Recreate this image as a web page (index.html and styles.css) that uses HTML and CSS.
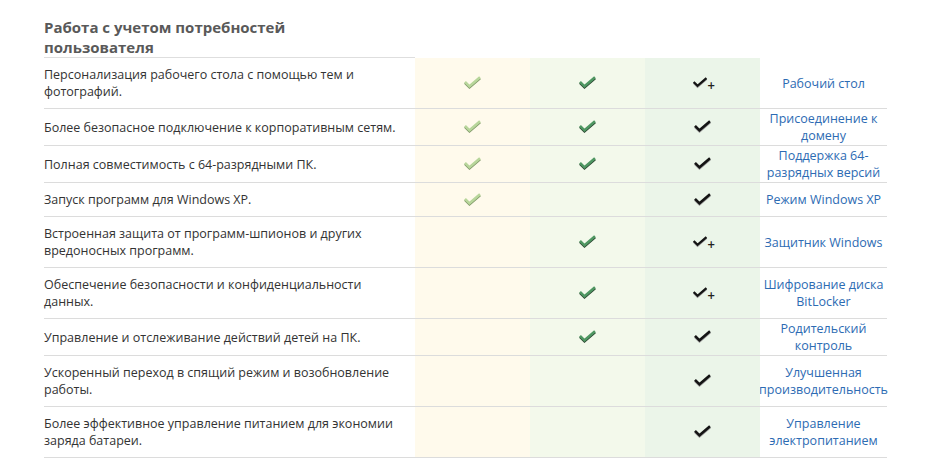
FILE: index.html
```html
<!DOCTYPE html>
<html lang="ru">
<head>
<meta charset="utf-8">
<link rel="stylesheet" href="styles.css">
</head>
<body>
<div class="page">
  <div class="section-title">Работа с учетом потребностей пользователя</div>
  <div class="grid">
    <div class="row">
      <div class="desc">Персонализация рабочего стола с помощью тем и фотографий.</div>
      <div class="c c1"><svg class="ck" viewBox="0 0 20 14"><path class="sh" d="M2 6.8 L6.5 11.3 L17 2.3"/><path class="fg" d="M2 5.8 L6.5 10.3 L17 1.3"/></svg></div>
      <div class="c c2"><svg class="ck" viewBox="0 0 20 14"><path class="sh" d="M2 6.8 L6.5 11.3 L17 2.3"/><path class="fg" d="M2 5.8 L6.5 10.3 L17 1.3"/></svg></div>
      <div class="c c3 plus-cell"><svg class="ck" viewBox="0 0 20 14"><path class="sh" d="M2 6.8 L6.5 11.3 L17 2.3"/><path class="fg" d="M2 5.8 L6.5 10.3 L17 1.3"/></svg><span class="plus">+</span></div>
      <div class="link"><a href="#">Рабочий стол</a></div>
    </div>
    <div class="row">
      <div class="desc">Более безопасное подключение к корпоративным сетям.</div>
      <div class="c c1"><svg class="ck" viewBox="0 0 20 14"><path class="sh" d="M2 6.8 L6.5 11.3 L17 2.3"/><path class="fg" d="M2 5.8 L6.5 10.3 L17 1.3"/></svg></div>
      <div class="c c2"><svg class="ck" viewBox="0 0 20 14"><path class="sh" d="M2 6.8 L6.5 11.3 L17 2.3"/><path class="fg" d="M2 5.8 L6.5 10.3 L17 1.3"/></svg></div>
      <div class="c c3"><svg class="ck" viewBox="0 0 20 14"><path class="sh" d="M2 6.8 L6.5 11.3 L17 2.3"/><path class="fg" d="M2 5.8 L6.5 10.3 L17 1.3"/></svg></div>
      <div class="link"><a href="#">Присоединение к домену</a></div>
    </div>
    <div class="row">
      <div class="desc">Полная совместимость с 64-разрядными ПК.</div>
      <div class="c c1"><svg class="ck" viewBox="0 0 20 14"><path class="sh" d="M2 6.8 L6.5 11.3 L17 2.3"/><path class="fg" d="M2 5.8 L6.5 10.3 L17 1.3"/></svg></div>
      <div class="c c2"><svg class="ck" viewBox="0 0 20 14"><path class="sh" d="M2 6.8 L6.5 11.3 L17 2.3"/><path class="fg" d="M2 5.8 L6.5 10.3 L17 1.3"/></svg></div>
      <div class="c c3"><svg class="ck" viewBox="0 0 20 14"><path class="sh" d="M2 6.8 L6.5 11.3 L17 2.3"/><path class="fg" d="M2 5.8 L6.5 10.3 L17 1.3"/></svg></div>
      <div class="link"><a href="#">Поддержка 64-разрядных версий</a></div>
    </div>
    <div class="row">
      <div class="desc">Запуск программ для Windows XP.</div>
      <div class="c c1"><svg class="ck" viewBox="0 0 20 14"><path class="sh" d="M2 6.8 L6.5 11.3 L17 2.3"/><path class="fg" d="M2 5.8 L6.5 10.3 L17 1.3"/></svg></div>
      <div class="c c2"></div>
      <div class="c c3"><svg class="ck" viewBox="0 0 20 14"><path class="sh" d="M2 6.8 L6.5 11.3 L17 2.3"/><path class="fg" d="M2 5.8 L6.5 10.3 L17 1.3"/></svg></div>
      <div class="link"><a href="#">Режим Windows XP</a></div>
    </div>
    <div class="row">
      <div class="desc">Встроенная защита от программ-шпионов и других вредоносных программ.</div>
      <div class="c c1"></div>
      <div class="c c2"><svg class="ck" viewBox="0 0 20 14"><path class="sh" d="M2 6.8 L6.5 11.3 L17 2.3"/><path class="fg" d="M2 5.8 L6.5 10.3 L17 1.3"/></svg></div>
      <div class="c c3 plus-cell"><svg class="ck" viewBox="0 0 20 14"><path class="sh" d="M2 6.8 L6.5 11.3 L17 2.3"/><path class="fg" d="M2 5.8 L6.5 10.3 L17 1.3"/></svg><span class="plus">+</span></div>
      <div class="link"><a href="#">Защитник Windows</a></div>
    </div>
    <div class="row">
      <div class="desc">Обеспечение безопасности и конфиденциальности данных.</div>
      <div class="c c1"></div>
      <div class="c c2"><svg class="ck" viewBox="0 0 20 14"><path class="sh" d="M2 6.8 L6.5 11.3 L17 2.3"/><path class="fg" d="M2 5.8 L6.5 10.3 L17 1.3"/></svg></div>
      <div class="c c3 plus-cell"><svg class="ck" viewBox="0 0 20 14"><path class="sh" d="M2 6.8 L6.5 11.3 L17 2.3"/><path class="fg" d="M2 5.8 L6.5 10.3 L17 1.3"/></svg><span class="plus">+</span></div>
      <div class="link"><a href="#">Шифрование диска BitLocker</a></div>
    </div>
    <div class="row">
      <div class="desc">Управление и отслеживание действий детей на ПК.</div>
      <div class="c c1"></div>
      <div class="c c2"><svg class="ck" viewBox="0 0 20 14"><path class="sh" d="M2 6.8 L6.5 11.3 L17 2.3"/><path class="fg" d="M2 5.8 L6.5 10.3 L17 1.3"/></svg></div>
      <div class="c c3"><svg class="ck" viewBox="0 0 20 14"><path class="sh" d="M2 6.8 L6.5 11.3 L17 2.3"/><path class="fg" d="M2 5.8 L6.5 10.3 L17 1.3"/></svg></div>
      <div class="link"><a href="#">Родительский контроль</a></div>
    </div>
    <div class="row">
      <div class="desc">Ускоренный переход в спящий режим и возобновление работы.</div>
      <div class="c c1"></div>
      <div class="c c2"></div>
      <div class="c c3"><svg class="ck" viewBox="0 0 20 14"><path class="sh" d="M2 6.8 L6.5 11.3 L17 2.3"/><path class="fg" d="M2 5.8 L6.5 10.3 L17 1.3"/></svg></div>
      <div class="link"><a href="#">Улучшенная производительность</a></div>
    </div>
    <div class="row">
      <div class="desc">Более эффективное управление питанием для экономии заряда батареи.</div>
      <div class="c c1"></div>
      <div class="c c2"></div>
      <div class="c c3"><svg class="ck" viewBox="0 0 20 14"><path class="sh" d="M2 6.8 L6.5 11.3 L17 2.3"/><path class="fg" d="M2 5.8 L6.5 10.3 L17 1.3"/></svg></div>
      <div class="link"><a href="#">Управление электропитанием</a></div>
    </div>
  </div>
</div>
</body>
</html>
```

FILE: styles.css
```css
html, body {
  margin: 0;
  padding: 0;
  background: #fff;
}
.page {
  padding: 17px 0 0 44px;
  font-family: "Open Sans", "Noto Sans", sans-serif;
  font-size: 12.5px;
  color: #333;
}
.section-title {
  width: 300px;
  padding-right: 71px;
  font-size: 15px;
  font-weight: bold;
  line-height: 20px;
  color: #595959;
  border-bottom: 1px solid #dedede;
}
.grid {
  display: grid;
  grid-template-columns: 371px 115px 115px 115px 127px;
  width: 843px;
}
.row {
  display: contents;
}
.row > div {
  border-bottom: 1px solid #dcdcdc;
}
.desc {
  padding: 8px 16px 8px 0;
  line-height: 17px;
  display: flex;
  align-items: center;
}
.c {
  display: flex;
  align-items: center;
  justify-content: center;
  position: relative;
}
.c1 { background: #fffaec; }
.c2 { background: #f3f9eb; }
.c3 { background: #ebf5e9; }
.link {
  padding: 1px 2px;
  line-height: 17px;
  text-align: center;
  display: flex;
  align-items: center;
  justify-content: center;
}
.link a {
  color: #2d6bb3;
  text-decoration: none;
}
.ck {
  width: 20px;
  height: 14px;
  fill: none;
}
.ck path {
  stroke-width: 2.6;
  stroke-linecap: butt;
  stroke-linejoin: miter;
  fill: none;
}
.c1 .fg { stroke: #b8d69b; }
.c1 .sh { stroke: #7f9868; }
.c2 .fg { stroke: #4f9762; }
.c2 .sh { stroke: #2a4530; }
.c3 .fg { stroke: #141414; }
.c3 .sh { stroke: #9a9a9a; }
.plus-cell .ck {
  width: 17px;
  height: 12px;
  margin-left: -4px;
}
.plus {
  position: absolute;
  left: 62px;
  top: 50%;
  margin-top: -2px;
  font-family: "DejaVu Sans", sans-serif;
  font-size: 10px;
  font-weight: bold;
  line-height: 10px;
  color: #222;
}
```
